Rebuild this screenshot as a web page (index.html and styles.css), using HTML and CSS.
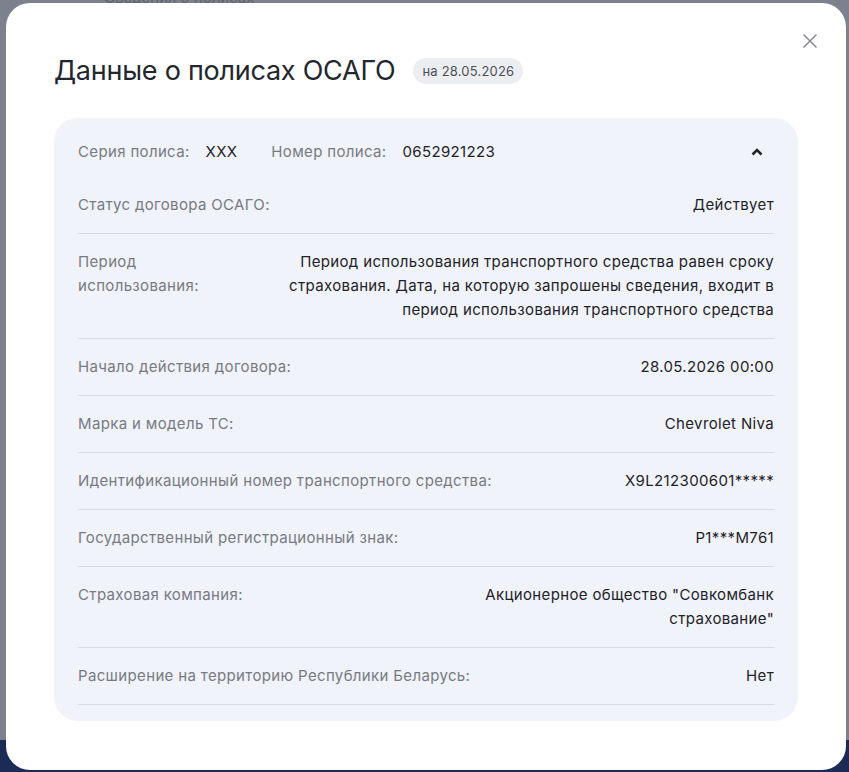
FILE: index.html
```html
<!DOCTYPE html>
<html lang="ru">
<head>
  <meta charset="UTF-8">
  <meta name="viewport" content="width=device-width, initial-scale=1.0">
  <title>Данные о полисах ОСАГО</title>
  <link rel="stylesheet" href="styles.css">
</head>
<body>

  <div class="backdrop-text">Сведения о полисах</div>

  <!-- Модальное окно -->
  <div class="modal">
    <button class="close" aria-label="Закрыть">
      <svg width="16" height="16" viewBox="0 0 16 16"><path d="M1.5 1.5l13 13M14.5 1.5l-13 13" stroke="#8a8d94" stroke-width="1.6" fill="none"/></svg>
    </button>

    <div class="modal-head">
      <h1>Данные о полисах ОСАГО</h1>
      <span class="date-badge">на 28.05.2026</span>
    </div>

    <!-- Карточка полиса -->
    <div class="policy">
      <div class="policy-head">
        <span class="label">Серия полиса:</span>
        <span class="value">XXX</span>
        <span class="label label-gap">Номер полиса:</span>
        <span class="value">0652921223</span>
        <svg class="chevron" width="14" height="10" viewBox="0 0 14 10"><path d="M2.5 7.5L7 3l4.5 4.5" stroke="#22252b" stroke-width="2.6" fill="none"/></svg>
      </div>

      <div class="row">
        <div class="label">Статус договора ОСАГО:</div>
        <div class="value">Действует</div>
      </div>
      <div class="row">
        <div class="label">Период использования:</div>
        <div class="value">Период использования транспортного средства равен сроку страхования. Дата, на которую запрошены сведения, входит в период использования транспортного средства</div>
      </div>
      <div class="row">
        <div class="label">Начало действия договора:</div>
        <div class="value">28.05.2026 00:00</div>
      </div>
      <div class="row">
        <div class="label">Марка и модель ТС:</div>
        <div class="value">Chevrolet Niva</div>
      </div>
      <div class="row">
        <div class="label">Идентификационный номер транспортного средства:</div>
        <div class="value">X9L212300601*****</div>
      </div>
      <div class="row">
        <div class="label">Государственный регистрационный знак:</div>
        <div class="value">Р1***М761</div>
      </div>
      <div class="row">
        <div class="label">Страховая компания:</div>
        <div class="value value-narrow">Акционерное общество "Совкомбанк страхование"</div>
      </div>
      <div class="row">
        <div class="label">Расширение на территорию Республики Беларусь:</div>
        <div class="value">Нет</div>
      </div>
    </div>
  </div>

</body>
</html>
```

FILE: styles.css
```css
body {
  margin: 0;
  height: 772px;
  overflow: hidden;
  font-family: Inter, "Noto Sans", sans-serif;
  background: linear-gradient(#7c818d 0, #7c818d 740px, #1c2a56 740px);
  position: relative;
}
.backdrop-text {
  position: absolute;
  left: 104px;
  top: -12px;
  font-size: 15px;
  color: #5e636e;
}
.modal {
  position: relative;
  box-sizing: border-box;
  width: 840px;
  height: 767px;
  margin: 3px 0 0 6px;
  padding: 47px 48px 0 48px;
  background: #fff;
  border-radius: 24px;
}
.close {
  position: absolute;
  top: 30px;
  right: 28px;
  padding: 0;
  border: 0;
  background: none;
  cursor: pointer;
}
.modal-head {
  display: flex;
  align-items: center;
  gap: 18px;
  height: 40px;
  margin-bottom: 28px;
}
.modal-head h1 {
  margin: 0;
  font-size: 27px;
  font-weight: 400;
  letter-spacing: -0.25px;
  color: #23262d;
}
.date-badge {
  padding: 5px 9px;
  font-size: 13px;
  letter-spacing: 0.2px;
  color: #4d5058;
  background: #eceef2;
  border-radius: 13px;
  margin-top: 2px;
}
.policy {
  padding: 0 24px 16px;
  background: #f0f3fa;
  border-radius: 24px;
}
.policy-head {
  display: flex;
  align-items: center;
  padding: 22px 0 14px;
  line-height: 23px;
  font-size: 15px;
  letter-spacing: 0.35px;
}
.policy-head .value {
  margin-left: 16px;
}
.label-gap {
  margin-left: 34px;
}
.chevron {
  margin-left: auto;
  margin-right: 10px;
}
.label {
  color: #777a82;
}
.value {
  color: #1f2228;
}
.row {
  display: flex;
  justify-content: space-between;
  gap: 28px;
  padding: 16px 0;
  font-size: 15px;
  line-height: 24px;
  letter-spacing: 0.35px;
  border-bottom: 1px solid #d8dbe2;
}
.row .value {
  max-width: 490px;
  text-align: right;
}
.row .value-narrow {
  max-width: 300px;
}
```
